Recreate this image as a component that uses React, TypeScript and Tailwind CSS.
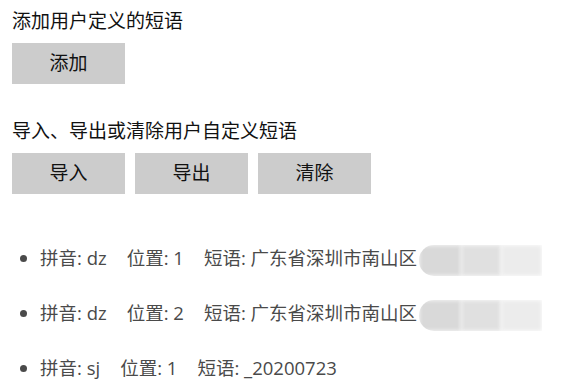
import React from "react"

const btn = "w-[113px] h-[41px] bg-[#cccccc] text-[19px] text-[#111] leading-none"

const rows = [
  { py: "dz", pos: "1", text: "广东省深圳市南山区", blur: true },
  { py: "dz", pos: "2", text: "广东省深圳市南山区", blur: true },
  { py: "sj", pos: "1", text: "_20200723", blur: false },
]

export default function App() {
  return (
    <div
      className="min-h-[388px] w-[579px] bg-white px-3 pt-[8px] text-[#111]"
      style={{ fontFamily: "'Open Sans', 'Noto Sans CJK SC', sans-serif" }}
    >
      <h2 className="text-[19px] leading-[27px] font-normal">添加用户定义的短语</h2>
      <button className={`${btn} mt-2`}>添加</button>

      <h2 className="mt-[34px] text-[19px] leading-[27px] font-normal">导入、导出或清除用户自定义短语</h2>
      <div className="mt-2 flex gap-[10px]">
        <button className={btn}>导入</button>
        <button className={btn}>导出</button>
        <button className={btn}>清除</button>
      </div>

      <ul className="mt-[50px] list-disc pl-[28px] text-[18.5px] leading-[27px] text-[#4a4a4a] space-y-[28px]">
        {rows.map((r, i) => (
          <li key={i} className="h-[27px] whitespace-nowrap">
            <span className="mr-[20px]">拼音: {r.py}</span>
            <span className="mr-[20px]">位置: {r.pos}</span>
            <span>短语: {r.text}</span>
            {r.blur && (
              <span className="-my-[3px] ml-[2px] inline-flex h-[31px] w-[123px] align-middle overflow-hidden rounded-l-[15px]">
                <span className="h-full w-[42px] bg-[#d9d9d9] blur-[2px]" />
                <span className="h-full w-[40px] bg-[#e0e0e0] blur-[2px]" />
                <span className="h-full w-[41px] bg-[#ececec] blur-[2px]" />
              </span>
            )}
          </li>
        ))}
      </ul>
    </div>
  )
}
